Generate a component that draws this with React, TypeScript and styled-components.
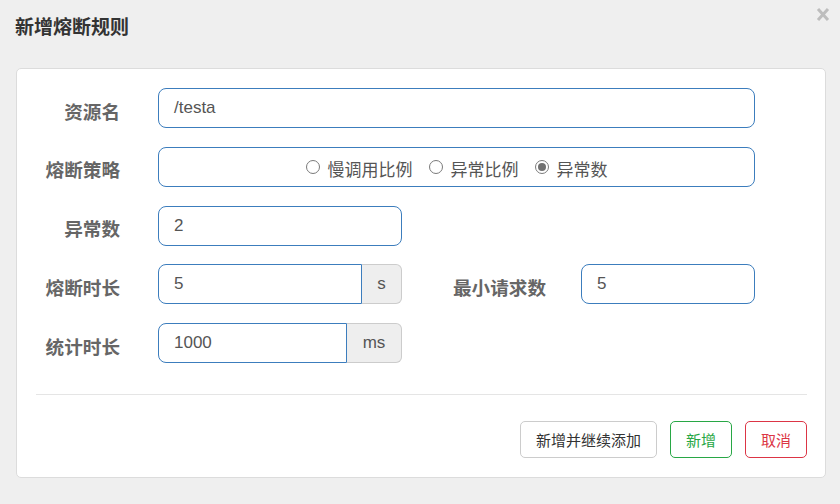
import styled, { createGlobalStyle } from 'styled-components'

const GlobalStyle = createGlobalStyle`
  html, body {
    margin: 0;
    padding: 0;
    background: #efefef;
    font-family: "Liberation Sans", "Noto Sans CJK SC", sans-serif;
  }
  * { box-sizing: border-box; }
`

const Modal = styled.div`
  position: relative;
  width: 840px;
  height: 504px;
  background: #efefef;
`

const Header = styled.div`
  height: 68px;
  padding: 14px 15px 0;
`

const Title = styled.h4`
  margin: 0;
  font-size: 19px;
  line-height: 27px;
  font-weight: 700;
  color: #333;
`

const Close = styled.button`
  position: absolute;
  top: 7px;
  right: 10px;
  width: 14px;
  height: 15px;
  padding: 0;
  border: 0;
  background: transparent;
  cursor: pointer;
`

const Card = styled.div`
  margin: 0 14px 0 16px;
  background: #fff;
  border: 1px solid #dcdcdc;
  border-radius: 5px;
  padding: 19px 18px 19px 0;
`

const Form = styled.div`
  display: flex;
  flex-direction: column;
  gap: 18.75px;
`

const Row = styled.div`
  display: flex;
  align-items: center;
  height: 40px;
`

const Label = styled.label<{ $w?: number; $ml?: number }>`
  width: ${p => p.$w ?? 103}px;
  margin-left: ${p => p.$ml ?? 0}px;
  margin-right: ${p => (p.$ml ? 35 : 38)}px;
  text-align: right;
  font-size: 18.6px;
  font-weight: 700;
  color: #666;
  padding-top: 4px;
  white-space: nowrap;
`

const Input = styled.div<{ $w: number; $group?: boolean }>`
  width: ${p => p.$w}px;
  height: 40px;
  display: flex;
  align-items: center;
  padding: 0 15px;
  border: 1px solid #3c7dbd;
  border-radius: ${p => (p.$group ? '8px 0 0 8px' : '8px')};
  font-size: 17px;
  color: #555;
  background: #fff;
`

const Group = styled.div`
  display: flex;
`

const Addon = styled.div<{ $w: number }>`
  width: ${p => p.$w}px;
  height: 40px;
  display: flex;
  align-items: center;
  justify-content: center;
  background: #eee;
  border: 1px solid #ccc;
  border-left: 0;
  border-radius: 0 6px 6px 0;
  font-size: 17px;
  color: #555;
`

const RadioBox = styled.div`
  width: 597px;
  height: 40px;
  display: flex;
  align-items: center;
  justify-content: center;
  gap: 16px;
  border: 1px solid #3c7dbd;
  border-radius: 8px;
  padding-top: 3px;
`

const RadioItem = styled.label`
  display: flex;
  align-items: center;
  gap: 8px;
  font-size: 17px;
  color: #555;
`

const Dot = styled.span<{ $on?: boolean }>`
  width: 14px;
  height: 14px;
  border-radius: 50%;
  border: 1.5px solid #7a7a7a;
  display: flex;
  align-items: center;
  justify-content: center;
  background: #fff;
  margin-top: -3px;
  &::after {
    content: '';
    width: 8px;
    height: 8px;
    border-radius: 50%;
    background: ${p => (p.$on ? '#707070' : 'transparent')};
  }
`

const Divider = styled.hr`
  margin: 31px 0 26px 19px;
  border: 0;
  border-top: 1px solid #e5e5e5;
`

const Footer = styled.div`
  display: flex;
  justify-content: flex-end;
  gap: 13px;
`

const Btn = styled.button<{ $kind?: 'default' | 'success' | 'danger' }>`
  height: 37px;
  padding: 0 15px;
  background: #fff;
  border-radius: 5px;
  font-family: inherit;
  font-size: 15px;
  cursor: pointer;
  border: 1px solid
    ${p => (p.$kind === 'success' ? '#28a745' : p.$kind === 'danger' ? '#dc3545' : '#ccc')};
  color: ${p => (p.$kind === 'success' ? '#28a745' : p.$kind === 'danger' ? '#dc3545' : '#333')};
`

const strategies = [
  { text: '慢调用比例', on: false },
  { text: '异常比例', on: false },
  { text: '异常数', on: true },
]

export default function App() {
  return (
    <Modal>
      <GlobalStyle />
      <Header>
        <Title>新增熔断规则</Title>
      </Header>
      <Close aria-label="close">
        <svg width="14" height="15" viewBox="0 0 14 15">
          <path d="M2 2 L12 13 M12 2 L2 13" stroke="#bdbdbd" strokeWidth="3" fill="none" />
        </svg>
      </Close>
      <Card>
        <Form>
          <Row>
            <Label>资源名</Label>
            <Input $w={597}>/testa</Input>
          </Row>
          <Row>
            <Label>熔断策略</Label>
            <RadioBox>
              {strategies.map(s => (
                <RadioItem key={s.text}>
                  <Dot $on={s.on} />
                  {s.text}
                </RadioItem>
              ))}
            </RadioBox>
          </Row>
          <Row>
            <Label>异常数</Label>
            <Input $w={244}>2</Input>
          </Row>
          <Row>
            <Label>熔断时长</Label>
            <Group>
              <Input $w={204} $group>5</Input>
              <Addon $w={40}>s</Addon>
            </Group>
            <Label $w={96} $ml={48}>最小请求数</Label>
            <Input $w={174}>5</Input>
          </Row>
          <Row>
            <Label>统计时长</Label>
            <Group>
              <Input $w={189} $group>1000</Input>
              <Addon $w={55}>ms</Addon>
            </Group>
          </Row>
        </Form>
        <Divider />
        <Footer>
          <Btn>新增并继续添加</Btn>
          <Btn $kind="success">新增</Btn>
          <Btn $kind="danger">取消</Btn>
        </Footer>
      </Card>
    </Modal>
  )
}
